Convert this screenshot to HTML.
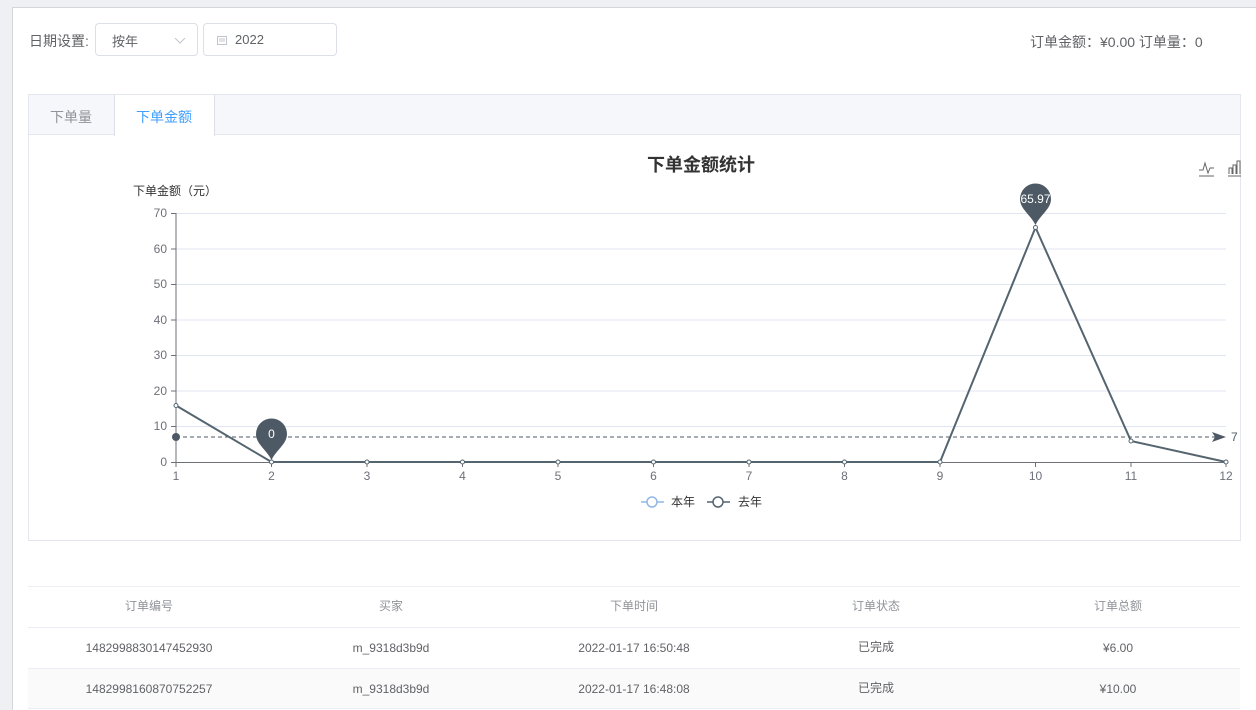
<!DOCTYPE html>
<html><head><meta charset="utf-8"><style>
*{margin:0;padding:0;box-sizing:border-box}
body{width:1256px;height:710px;overflow:hidden;background:#eef0f3;font-family:"Liberation Sans","Noto Sans CJK SC",sans-serif;position:relative;color:#606266}
.panel{position:absolute;left:12px;top:7px;width:1244px;height:703px;background:#fff;border-top:1px solid #d4d6da;border-left:1px solid #d4d6da}
.abs{position:absolute}
.box{position:absolute;border:1px solid #dcdfe6;border-radius:4px;background:#fff;font-size:13px;color:#606266}
.th,.td{position:absolute;width:242px;text-align:center;font-size:12px;line-height:16px}
</style></head><body>
<div class="panel"></div>
<div class="abs" style="left:29px;top:31px;font-size:14px;color:#606266">日期设置:</div>
<div class="box" style="left:95px;top:23px;width:103px;height:33px"><span class="abs" style="left:16px;top:7px">按年</span>
<svg class="abs" style="left:78px;top:11px" width="12" height="10"><path d="M1 3 L6 8 L11 3" fill="none" stroke="#c0c4cc" stroke-width="1"/></svg></div>
<div class="box" style="left:203px;top:23px;width:134px;height:33px">
<svg class="abs" style="left:12px;top:10px" width="12" height="12"><rect x="1.5" y="2.5" width="9" height="8" fill="none" stroke="#c0c4cc"/><path d="M3 5H9M3 7H9" stroke="#c0c4cc"/></svg>
<span class="abs" style="left:31px;top:8px">2022</span></div>
<div class="abs" style="left:1030px;top:32px;font-size:14px;color:#606266">订单金额：¥0.00 订单量：0</div>

<div class="abs" style="left:28px;top:94px;width:1213px;height:447px;border:1px solid #e4e7ed;background:#fff"></div>
<div class="abs" style="left:29px;top:95px;width:1211px;height:40px;background:#f5f7fa;border-bottom:1px solid #e4e7ed"></div>
<div class="abs" style="left:114px;top:95px;width:101px;height:41px;background:#fff;border-left:1px solid #dcdfe6;border-right:1px solid #dcdfe6"></div>
<div class="abs" style="left:50px;top:107px;font-size:14px;color:#909399">下单量</div>
<div class="abs" style="left:136px;top:107px;font-size:14px;color:#409eff">下单金额</div>

<svg class="abs" style="left:0;top:0" width="1256" height="710" font-family="Liberation Sans,Noto Sans CJK SC,sans-serif">
<text x="701" y="171" text-anchor="middle" font-size="18" font-weight="bold" fill="#333">下单金额统计</text>
<path d="M1199 170h4l2-7 3 10 2-5h4M1199 176h15" fill="none" stroke="#666" stroke-width="1"/>
<path d="M1229 174v-6h3v6M1233 174v-9h3v9M1237 174v-13h3v13M1228 176h13" fill="none" stroke="#666" stroke-width="1"/>
<text x="133" y="195" font-size="12" fill="#333">下单金额（元）</text>
<g stroke="#e0e6f1" stroke-width="1">
<path d="M176 213.5H1226M176 249H1226M176 284.5H1226M176 320H1226M176 355.5H1226M176 391H1226M176 426.5H1226"/></g>
<g stroke="#6e7079" stroke-width="1"><path d="M176 213V462.5M171 213.5H176M171 249H176M171 284.5H176M171 320H176M171 355.5H176M171 391H176M171 426.5H176M171 462.5H1226"/>
<path d="M176 462v5M271.5 462v5M367 462v5M462.5 462v5M558 462v5M653.5 462v5M749 462v5M844.5 462v5M940 462v5M1035.5 462v5M1131 462v5M1226 462v5"/></g>
<g font-size="12" fill="#6e7079" text-anchor="end">
<text x="167" y="217">70</text><text x="167" y="253">60</text><text x="167" y="288">50</text><text x="167" y="324">40</text><text x="167" y="359">30</text><text x="167" y="395">20</text><text x="167" y="430">10</text><text x="167" y="466">0</text></g>
<g font-size="12" fill="#6e7079" text-anchor="middle">
<text x="176" y="480">1</text><text x="271.5" y="480">2</text><text x="367" y="480">3</text><text x="462.5" y="480">4</text><text x="558" y="480">5</text><text x="653.5" y="480">6</text><text x="749" y="480">7</text><text x="844.5" y="480">8</text><text x="940" y="480">9</text><text x="1035.5" y="480">10</text><text x="1131" y="480">11</text><text x="1226" y="480">12</text></g>
<path d="M176 437H1216" stroke="#4d5a66" stroke-dasharray="4,3" stroke-width="1"/>
<circle cx="176" cy="437" r="4" fill="#4d5a66"/>
<path d="M1212 432L1226 437L1212 442L1215 437Z" fill="#4d5a66"/>
<text x="1231" y="441" font-size="12" fill="#4d5a66">7</text>
<polyline points="176,405.5 271.5,462 367,462 462.5,462 558,462 653.5,462 749,462 844.5,462 940,462 1035.5,227.5 1131,441 1226,462" fill="none" stroke="#546570" stroke-width="2"/>
<g fill="#fff" stroke="#546570" stroke-width="1">
<circle cx="176" cy="405.5" r="2"/><circle cx="271.5" cy="462" r="2"/><circle cx="367" cy="462" r="2"/><circle cx="462.5" cy="462" r="2"/><circle cx="558" cy="462" r="2"/><circle cx="653.5" cy="462" r="2"/><circle cx="749" cy="462" r="2"/><circle cx="844.5" cy="462" r="2"/><circle cx="940" cy="462" r="2"/><circle cx="1035.5" cy="227.5" r="2"/><circle cx="1131" cy="441" r="2"/><circle cx="1226" cy="462" r="2"/></g>
<path d="M271.5 460 C266 449 256 444 256 434 A15.5 15.5 0 1 1 287 434 C287 444 277 449 271.5 460Z" fill="#4d5a66"/>
<text x="271.5" y="438" text-anchor="middle" font-size="12" fill="#fff">0</text>
<path d="M1035.5 225 C1030 214 1020 209 1020 199 A15.5 15.5 0 1 1 1051 199 C1051 209 1041 214 1035.5 225Z" fill="#4d5a66"/>
<text x="1035.5" y="203" text-anchor="middle" font-size="12" fill="#fff">65.97</text>
<path d="M641 502h23" stroke="#91b7e8" stroke-width="1.5"/><circle cx="652" cy="502" r="5" fill="#fff" stroke="#91b7e8" stroke-width="1.5"/>
<text x="671" y="506" font-size="12" fill="#333">本年</text>
<path d="M707 502h23" stroke="#546570" stroke-width="1.5"/><circle cx="718" cy="502" r="5" fill="#fff" stroke="#546570" stroke-width="1.5"/>
<text x="738" y="506" font-size="12" fill="#333">去年</text>
</svg>

<div class="abs" style="left:28px;top:586px;width:1212px;border-top:1px solid #ebeef5"></div>
<div class="abs" style="left:28px;top:627px;width:1212px;border-top:1px solid #ebeef5"></div>
<div class="abs" style="left:28px;top:668px;width:1212px;height:41px;background:#fafafa;border-top:1px solid #ebeef5;border-bottom:1px solid #ebeef5"></div>
<div class="th" style="left:28px;top:598px;color:#909399">订单编号</div>
<div class="th" style="left:270px;top:598px;color:#909399">买家</div>
<div class="th" style="left:513px;top:598px;color:#909399">下单时间</div>
<div class="th" style="left:755px;top:598px;color:#909399">订单状态</div>
<div class="th" style="left:997px;top:598px;color:#909399">订单总额</div>
<div class="td" style="left:28px;top:640px">1482998830147452930</div>
<div class="td" style="left:270px;top:640px">m_9318d3b9d</div>
<div class="td" style="left:513px;top:640px">2022-01-17 16:50:48</div>
<div class="td" style="left:755px;top:639px">已完成</div>
<div class="td" style="left:997px;top:640px">¥6.00</div>
<div class="td" style="left:28px;top:681px">1482998160870752257</div>
<div class="td" style="left:270px;top:681px">m_9318d3b9d</div>
<div class="td" style="left:513px;top:681px">2022-01-17 16:48:08</div>
<div class="td" style="left:755px;top:680px">已完成</div>
<div class="td" style="left:997px;top:681px">¥10.00</div>
</body></html>
